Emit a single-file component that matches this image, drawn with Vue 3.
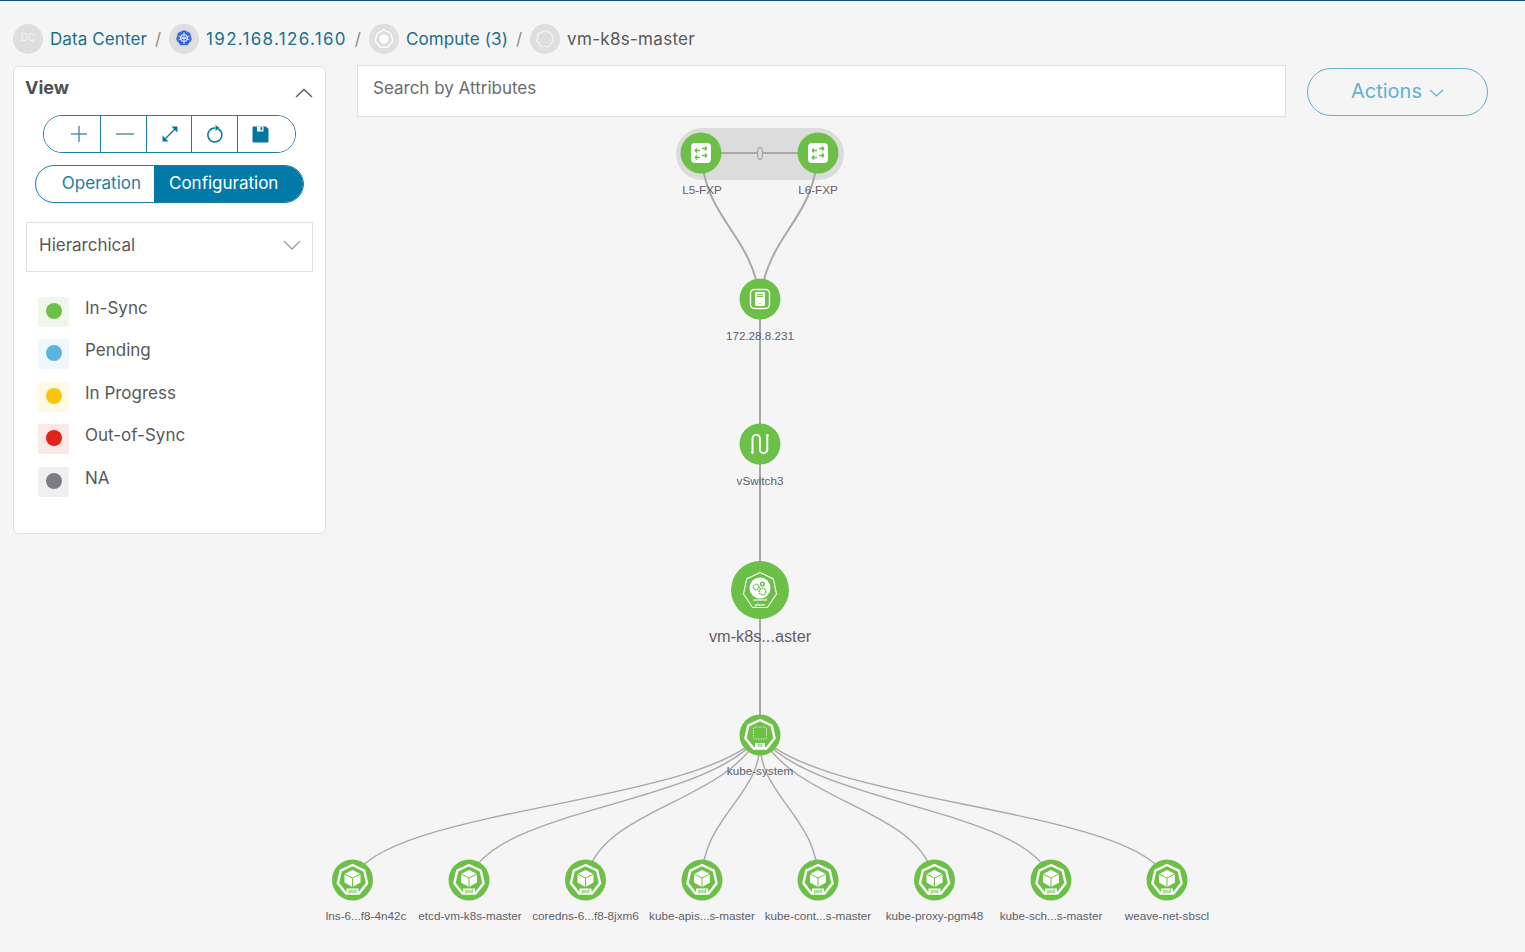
<script setup>
const crumbs = [
  { label: 'Data Center', icon: 'dc', link: true, cls: 'dc-text' },
  { label: '192.168.126.160', icon: 'k8s', link: true, cls: 'ip-text' },
  { label: 'Compute (3)', icon: 'hex', link: true, cls: 'dc-text' },
  { label: 'vm-k8s-master', icon: 'ring', link: false, cls: 'vm-text' }
]
const legend = [
  { label: 'In-Sync', bg: '#eff7ea', dot: '#6cbf47' },
  { label: 'Pending', bg: '#eef7fc', dot: '#5cb5e0' },
  { label: 'In Progress', bg: '#fff9e6', dot: '#fdc40c' },
  { label: 'Out-of-Sync', bg: '#fde8e8', dot: '#e2231a' },
  { label: 'NA', bg: '#f0f0f2', dot: '#7c7c84' }
]
const heptagon = '0,-15 11.7,-9.4 14.6,3.3 6.5,13.5 -6.5,13.5 -14.6,3.3 -11.7,-9.4'
const pods = [
  { x: 352.5, lx: 366, label: 'lns-6...f8-4n42c' },
  { x: 469, lx: 470, label: 'etcd-vm-k8s-master' },
  { x: 585.5, lx: 585.5, label: 'coredns-6...f8-8jxm6' },
  { x: 702, lx: 702, label: 'kube-apis...s-master' },
  { x: 818, lx: 818, label: 'kube-cont...s-master' },
  { x: 934.5, lx: 934.5, label: 'kube-proxy-pgm48' },
  { x: 1051, lx: 1051, label: 'kube-sch...s-master' },
  { x: 1167, lx: 1167, label: 'weave-net-sbscl' }
]
const left = [
  { c1x: 700, c1y: 805, c2x: 380, c2y: 808, x: 352.5 },
  { c1x: 710, c1y: 805, c2x: 490, c2y: 808, x: 469 },
  { c1x: 722, c1y: 805, c2x: 600, c2y: 808, x: 585.5 },
  { c1x: 765, c1y: 795, c2x: 702, c2y: 815, x: 702 }
]
const toPath = (e) => `M760 735C${e.c1x} ${e.c1y} ${e.c2x} ${e.c2y} ${e.x} 880`
const mirror = (e, x) => ({ ...e, c1x: 1520 - e.c1x, c2x: 1520 - e.c2x, x })
const podEdges = [
  ...left.map(toPath),
  toPath(mirror(left[3], 818)),
  toPath(mirror(left[2], 934.5)),
  toPath(mirror(left[1], 1051)),
  toPath(mirror(left[0], 1167))
]
const nodes = [
  { kind: 'switch', x: 701, y: 153, r: 20.5, lx: 702, ly: 189, label: 'L5-FXP' },
  { kind: 'switch', x: 818, y: 153, r: 20.5, lx: 818, ly: 189, label: 'L6-FXP' },
  { kind: 'host', x: 760, y: 299, r: 20.5, lx: 760, ly: 335, label: '172.28.8.231' },
  { kind: 'vswitch', x: 760, y: 444, r: 20.5, lx: 760, ly: 480, label: 'vSwitch3' },
  { kind: 'control', x: 760, y: 590, r: 29, lx: 760, ly: 636, label: 'vm-k8s...aster', big: true },
  { kind: 'ns', x: 760, y: 735, r: 20.5, lx: 760, ly: 770, label: 'kube-system' },
  ...pods.map((p) => ({ kind: 'pod', x: p.x, y: 880, r: 20.5, lx: p.lx, ly: 915, label: p.label }))
]
const labelStyle = (n) => ({ left: n.lx + 'px', top: n.ly + 'px' })
</script>

<template>
  <div class="page">
    <div class="canvas">
      <svg class="graph" width="1525" height="952" viewBox="0 0 1525 952">
        <rect x="676" y="128" width="168" height="52" rx="26" fill="#dcdcdc" />
        <g fill="none" stroke="#a8a8a8" stroke-width="2">
          <path d="M701 153H818" />
          <path d="M701 153C706 222 751 232 760 299" />
          <path d="M818 153C813 222 769 232 760 299" />
          <path d="M760 299V735" />
          <path v-for="(d, i) in podEdges" :key="i" :d="d" stroke-width="1.4" />
        </g>
        <ellipse cx="760" cy="153.500" rx="2.500" ry="6" fill="#dcdcdc" stroke="#a0a0a0" stroke-width="1.200" />
        <g v-for="n in nodes" :key="n.label" :transform="`translate(${n.x} ${n.y})`">
          <circle :r="n.r" fill="#6cbf47" />
          <g v-if="n.kind === 'switch'">
            <rect x="-10" y="-10" width="20" height="20" rx="4" fill="#fff" />
            <g fill="none" stroke="#6cbf47" stroke-width="1.400">
              <path d="M-6 -2.500H-1M-6 -2.500L-4 -4.500M-6 -2.500L-4 -0.500" />
              <path d="M1 -4.500H6M6 -4.500L4 -6.500M6 -4.500L4 -2.500" />
              <path d="M-6 4.500H-1M-6 4.500L-4 2.500M-6 4.500L-4 6.500" />
              <path d="M1 2.500H6M6 2.500L4 0.500M6 2.500L4 4.500" />
            </g>
          </g>
          <g v-else-if="n.kind === 'host'">
            <rect x="-9.500" y="-9.500" width="19" height="19" rx="4" fill="none" stroke="#fff" stroke-width="1.400" />
            <rect x="-5" y="-7" width="10" height="14" rx="1" fill="#fff" />
            <path d="M-3 -4.500H3M-3 -2.500H3" stroke="#6cbf47" stroke-width="1.100" />
            <circle cy="4.500" r="0.700" fill="#6cbf47" />
          </g>
          <g v-else-if="n.kind === 'vswitch'">
            <path d="M-7.500 8V-5.500A3.700 3.700 0 0 1 -0.100 -5.500V5.500A3.700 3.700 0 0 0 7.300 5.500V-8" fill="none" stroke="#fff" stroke-width="1.900" />
            <circle cx="-7.500" cy="8.500" r="1.400" fill="#fff" />
            <circle cx="7.300" cy="-8.500" r="1.400" fill="#fff" />
          </g>
          <g v-else-if="n.kind === 'control'">
            <polygon points="0,-17.500 13.300,-11 16.500,4 7.400,17.500 -7.400,17.500 -16.500,4 -13.300,-11" fill="none" stroke="#fff" stroke-width="1.100" />
            <circle cy="-2" r="10.500" fill="#fff" />
            <g fill="none" stroke="#6cbf47" stroke-width="1.500">
              <circle cx="-3.800" cy="-3" r="2.800" stroke-dasharray="1.600 0.700" />
              <circle cx="2.500" cy="-6" r="1.800" />
              <circle cx="2.500" cy="1.500" r="3.300" stroke-dasharray="1.700 0.700" />
            </g>
            <text y="11.300" text-anchor="middle" class="tiny-w" font-size="4">control</text>
            <text y="15.800" text-anchor="middle" class="tiny-w" font-size="4">plane</text>
          </g>
          <g v-else-if="n.kind === 'ns'">
            <polygon :points="heptagon" fill="none" stroke="#fff" stroke-width="2.400" stroke-linejoin="round" />
            <rect x="-6.500" y="-8" width="13" height="12" rx="2" fill="none" stroke="#fff" stroke-width="0.800" stroke-dasharray="1.500 1" />
            <rect x="-5" y="8" width="10" height="5" fill="#fff" />
            <text y="12" text-anchor="middle" class="tiny" font-size="4.500" font-weight="700">ns</text>
          </g>
          <g v-else>
            <polygon :points="heptagon" fill="none" stroke="#fff" stroke-width="2.400" stroke-linejoin="round" />
            <path d="M0 -10L8 -6 8 2.500 0 7 -8 2.500 -8 -6Z" fill="#fff" />
            <path d="M-8 -6L0 -2 8 -6M0 -2V7" fill="none" stroke="#6cbf47" stroke-width="1" />
            <rect x="-6" y="8.500" width="12" height="5" fill="#fff" />
            <text y="12.500" text-anchor="middle" class="tiny" font-size="4.500" font-weight="700">pod</text>
          </g>
        </g>
      </svg>
      <span v-for="n in nodes" :key="n.label" class="node-label" :class="{ big: n.big }" :style="labelStyle(n)">{{ n.label }}</span>
    </div>

    <nav class="crumbs">
      <template v-for="(c, i) in crumbs" :key="c.label">
        <span v-if="i" class="sep">/</span>
        <span class="crumb-icon">
          <span v-if="c.icon === 'dc'" class="dc">DC</span>
          <svg v-else width="30" height="30" viewBox="-15 -15 30 30">
            <g v-if="c.icon === 'k8s'">
              <polygon points="0,-8 6.200,-5 7.800,1.800 3.500,7.200 -3.500,7.200 -7.800,1.800 -6.200,-5" transform="translate(0 -1)" fill="#3867d6" />
              <circle cy="-1" r="3.500" fill="none" stroke="#fff" stroke-width="1" />
              <path d="M0 -7V5M-5.500 -3L5.500 1M5.500 -3L-5.500 1" stroke="#fff" stroke-width="0.700" />
            </g>
            <g v-else-if="c.icon === 'hex'">
              <polygon points="0,-9 7,-5.600 8.800,2 3.900,8.100 -3.900,8.100 -8.800,2 -7,-5.600" fill="none" stroke="#fff" stroke-width="1.300" />
              <circle r="4.500" fill="#fff" />
            </g>
            <polygon v-else points="0,-8.500 6.600,-5.300 8.300,1.900 3.700,7.700 -3.700,7.700 -8.300,1.900 -6.600,-5.300" fill="none" stroke="#f4f4f4" stroke-width="1.300" />
          </svg>
        </span>
        <span class="crumb-text" :class="[c.cls, { link: c.link }]">{{ c.label }}</span>
      </template>
    </nav>

    <div class="content">
      <aside class="card">
        <header class="card-head">
          <h2>View</h2>
          <svg width="18" height="10" viewBox="0 0 18 10"><path d="M1 9L9 1.500 17 9" fill="none" stroke="#58585b" stroke-width="1.300" /></svg>
        </header>
        <div class="tools">
          <button class="tool plus"><svg width="18" height="18" viewBox="0 0 18 18"><path d="M9 1V17M1 9H17" stroke="#5d8fa8" stroke-width="1.500" /></svg></button>
          <button class="tool minus"><svg width="20" height="18" viewBox="0 0 20 18"><path d="M1 9H19" stroke="#5d8fa8" stroke-width="1.500" /></svg></button>
          <button class="tool expand"><svg width="16" height="16" viewBox="0 0 16 16"><path d="M3 13L13 3" stroke="#04759f" stroke-width="1.300" /><path d="M0.500 15.500V9.500L6.500 15.500ZM15.500 0.500V6.500L9.500 0.500Z" fill="#04759f" /></svg></button>
          <button class="tool refresh"><svg width="18" height="20" viewBox="0 0 18 20"><path d="M11.500 5A7 7 0 1 1 8 4" fill="none" stroke="#04759f" stroke-width="1.500" /><path d="M8.500 1L12.500 4 8.500 7Z" fill="#04759f" /></svg></button>
          <button class="tool save"><svg width="17" height="17" viewBox="0 0 17 17"><path d="M0.500 1.500A1 1 0 0 1 1.500 0.500H14L16.500 3V15.500A1 1 0 0 1 15.500 16.500H1.500A1 1 0 0 1 0.500 15.500Z" fill="#04759f" /><rect x="5" y="0.500" width="6.500" height="5" fill="#fff" /><rect x="8.500" y="1.200" width="1.800" height="3" fill="#04759f" /></svg></button>
        </div>
        <div class="toggle">
          <span class="opt">Operation</span>
          <span class="opt active">Configuration</span>
        </div>
        <div class="select">
          <span>Hierarchical</span>
          <svg width="18" height="10" viewBox="0 0 18 10"><path d="M1 1L9 9 17 1" fill="none" stroke="#9e9ea2" stroke-width="1.400" /></svg>
        </div>
        <ul class="legend">
          <li v-for="l in legend" :key="l.label">
            <span class="swatch" :style="{ background: l.bg }"><i :style="{ background: l.dot }"></i></span>
            <span>{{ l.label }}</span>
          </li>
        </ul>
      </aside>
      <div class="search">Search by Attributes</div>
      <button class="actions">
        <span>Actions</span>
        <svg width="15" height="8" viewBox="0 0 15 8"><path d="M1 1L7.500 7 14 1" fill="none" stroke="#64b0cf" stroke-width="1.200" /></svg>
      </button>
    </div>
  </div>
</template>

<style>
html, body { margin: 0; background: #f5f5f5; }
</style>

<style scoped>
.page {
  position: relative;
  width: 1525px;
  height: 952px;
  overflow: hidden;
  box-sizing: border-box;
  border-top: 1px solid #0d4f6e;
  background: #f5f5f5;
  font-family: Inter, "Liberation Sans", sans-serif;
  color: #58585b;
}
.canvas { position: absolute; left: 0; top: -1px; width: 1525px; height: 952px; }
.graph { display: block; }
.tiny { fill: #6cbf47; font-family: "Liberation Sans", sans-serif; }
.tiny-w { fill: #fff; font-family: "Liberation Sans", sans-serif; font-weight: 700; }
.node-label {
  position: absolute;
  transform: translate(-50%, -50%);
  font-family: "Liberation Sans", sans-serif;
  font-size: 11.700px;
  color: #5f6068;
  white-space: nowrap;
}
.node-label.big { font-size: 16.300px; }
.crumbs {
  position: relative;
  display: flex;
  align-items: center;
  height: 64px;
  box-sizing: border-box;
  padding: 11px 0 0 13px;
  font-size: 17px;
}
.crumb-icon {
  display: flex;
  align-items: center;
  justify-content: center;
  width: 30px;
  height: 30px;
  margin-right: 7px;
  border-radius: 50%;
  background: #dedede;
}
.dc { color: #f4f4f4; font-size: 10px; margin-top: -3px; }
.crumb-text { color: #58585b; }
.crumb-text.link { color: #1c6f8c; }
.dc-text { letter-spacing: 0.100px; }
.ip-text { letter-spacing: 1.300px; }
.vm-text { letter-spacing: 0.300px; }
.sep { margin: 0 8px; color: #8c8c8c; }
.content { position: relative; display: flex; align-items: flex-start; padding-left: 13px; }
.card {
  box-sizing: border-box;
  width: 313px;
  height: 468px;
  margin-top: 1px;
  padding: 0 12px;
  background: #fff;
  border: 1px solid #dfdfdf;
  border-radius: 6px;
  display: flex;
  flex-direction: column;
  align-items: center;
}
.card-head {
  align-self: stretch;
  height: 48px;
  display: flex;
  justify-content: space-between;
  align-items: center;
}
.card-head h2 { margin: -8px 0 0 -1px; font-size: 18px; font-weight: 700; color: #4f4f52; }
.card-head svg { margin-top: 3px; }
.tools {
  display: flex;
  width: 253px;
  height: 38px;
  box-sizing: border-box;
  border: 1px solid #1c7ea4;
  border-radius: 19px;
  overflow: hidden;
}
.tool {
  display: flex;
  align-items: center;
  justify-content: center;
  padding: 0;
  border: 0;
  background: #fff;
  border-right: 1px solid #1c7ea4;
  box-sizing: border-box;
}
.plus { width: 57px; padding-left: 13px; }
.minus { width: 46px; padding-left: 2px; }
.expand { width: 45px; padding-left: 1px; }
.refresh { width: 46px; padding-left: 2px; }
.save { flex: 1; border-right: 0; padding-right: 12px; }
.toggle {
  display: flex;
  width: 269px;
  height: 38px;
  margin-top: 12px;
  box-sizing: border-box;
  border: 1px solid #1c7ea4;
  border-radius: 19px;
  overflow: hidden;
  font-size: 17px;
}
.opt {
  display: flex;
  align-items: center;
  justify-content: flex-end;
  box-sizing: border-box;
  width: 118px;
  padding: 0 13px 3px 0;
  color: #1c7ea4;
}
.opt.active { flex: 1; width: auto; justify-content: flex-start; padding: 0 0 3px 15px; background: #027aa8; color: #fff; }
.select {
  align-self: stretch;
  height: 50px;
  margin-top: 19px;
  box-sizing: border-box;
  padding: 0 11px 4px 12px;
  display: flex;
  align-items: center;
  justify-content: space-between;
  border: 1px solid #dfdfdf;
  font-size: 17px;
}
.legend { align-self: stretch; list-style: none; margin: 24.900px 0 0; padding: 0 0 0 12px; font-size: 17px; }
.legend li { display: flex; gap: 16px; height: 42.500px; line-height: 23px; }
.swatch {
  display: flex;
  align-items: center;
  justify-content: center;
  width: 31px;
  height: 30px;
  border-radius: 2px;
}
.swatch i { display: block; width: 16px; height: 16px; margin-bottom: 2px; border-radius: 50%; }
.search {
  box-sizing: border-box;
  width: 929px;
  height: 52px;
  margin-left: 31px;
  padding: 0 15px 6px;
  display: flex;
  align-items: center;
  background: #fff;
  border: 1px solid #dfdfdf;
  font-size: 17px;
  color: #6b6b6e;
}
.actions {
  width: 181px;
  height: 48px;
  margin: 3px 0 0 21px;
  padding: 0 0 2px;
  display: flex;
  align-items: center;
  justify-content: center;
  gap: 7px;
  border: 1px solid #64b0cf;
  border-radius: 24px;
  background: transparent;
  color: #64b0cf;
  font: inherit;
  font-size: 20px;
}
.actions svg { margin-top: 3px; }
</style>
